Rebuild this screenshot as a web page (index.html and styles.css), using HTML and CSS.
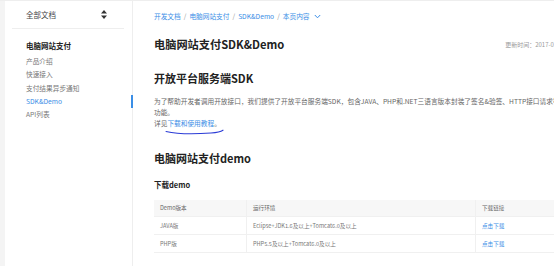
FILE: index.html
```html
<!DOCTYPE html>
<html>
<head>
  <meta charset="utf-8">
  <title>电脑网站支付SDK&amp;Demo</title>
  <link rel="stylesheet" href="styles.css">
</head>
<body>
  <div class="page">
    <div class="gutter"></div>

    <div class="sidebar">
      <div class="side-top">
        <span>全部文档</span>
        <svg class="sort" width="6" height="9" viewBox="0 0 6 9">
          <path d="M3 0 L6 3.5 L0 3.5 Z M3 9 L6 5.5 L0 5.5 Z" fill="#333"/>
        </svg>
      </div>
      <div class="side-title">电脑网站支付</div>
      <ul class="side-menu">
        <li>产品介绍</li>
        <li>快速接入</li>
        <li>支付结果异步通知</li>
        <li class="active">SDK&amp;Demo</li>
        <li>API列表</li>
      </ul>
    </div>

    <div class="main">
      <div class="crumbs">
        <a>开发文档</a> <span class="sep">/</span>
        <a>电脑网站支付</a> <span class="sep">/</span>
        <a>SDK&amp;Demo</a> <span class="sep">/</span>
        <a>本页内容</a>
        <svg width="7" height="5" viewBox="0 0 7 5"><path d="M0.8 1 L3.5 3.8 L6.2 1" fill="none" stroke="#3a8ee6" stroke-width="1"/></svg>
      </div>

      <div class="title-row">
        <h1>电脑网站支付SDK&amp;Demo</h1>
        <span class="updated">更新时间：2017-03-10</span>
      </div>

      <h2>开放平台服务端SDK</h2>
      <p class="text">为了帮助开发者调用开放接口，我们提供了开放平台服务端SDK，包含JAVA、PHP和.NET三语言版本封装了签名&amp;验签、HTTP接口请求等基础功能。</p>
      <p class="text see">详见<a>下载和使用教程</a>。
        <svg class="scribble" width="60" height="6" viewBox="0 0 60 6">
          <path d="M1 2.5 C12 5, 30 5.2, 46 4 C52 3.5, 56 2.5, 58 1.2" fill="none" stroke="#2a3bd6" stroke-width="1.1" stroke-linecap="round"/>
        </svg>
      </p>

      <h2 class="demo">电脑网站支付demo</h2>
      <h3>下载demo</h3>

      <table class="demo-table">
        <thead>
          <tr>
            <th class="c1">Demo版本</th>
            <th class="c2">运行环境</th>
            <th class="c3">下载链接</th>
          </tr>
        </thead>
        <tbody>
          <tr>
            <td>JAVA版</td>
            <td>Eclipse+JDK1.6及以上+Tomcat6.0及以上</td>
            <td><a>点击下载</a></td>
          </tr>
          <tr>
            <td>PHP版</td>
            <td>PHP5.5及以上+Tomcat6.0及以上</td>
            <td><a>点击下载</a></td>
          </tr>
        </tbody>
      </table>
    </div>
  </div>
</body>
</html>
```

FILE: styles.css
```css
html, body {
  margin: 0;
  padding: 0;
  height: 100%;
  overflow: hidden;
  background: #fff;
}

body {
  font-family: "Noto Sans CJK SC", "Liberation Sans", sans-serif;
  color: #333;
}

.page {
  display: flex;
  height: 266px;
  width: 700px;
  border-top: 1px solid #eee;
  box-sizing: border-box;
}

.gutter {
  width: 5px;
  background: #f4f4f4;
  flex: none;
}

.sidebar {
  width: 127px;
  flex: none;
  border-right: 1px solid #eee;
}

.side-top {
  display: flex;
  align-items: center;
  justify-content: space-between;
  height: 27px;
  margin: 0 8px 0 7px;
  padding: 0 17px 0 14px;
  font-size: 7.5px;
  color: #444;
  border-bottom: 1px solid #eee;
}

.side-top .sort {
  display: block;
}

.side-title {
  margin-top: 9px;
  padding-left: 21px;
  font-size: 7.5px;
  font-weight: bold;
  color: #222;
  line-height: 16px;
}

.side-menu {
  list-style: none;
  margin: 1px 0 0;
  padding: 0;
}

.side-menu li {
  position: relative;
  padding-left: 21px;
  font-size: 6.7px;
  line-height: 13.3px;
  color: #777;
}

.side-menu li.active {
  color: #3a8ee6;
}

.side-menu li.active::after {
  content: "";
  position: absolute;
  right: -1px;
  top: 0;
  width: 2px;
  height: 13px;
  background: #3a8ee6;
}

.main {
  padding-left: 21px;
  width: 420px;
  flex: none;
}

.crumbs {
  display: flex;
  align-items: center;
  gap: 3px;
  margin-top: 9px;
  height: 12px;
  font-size: 6.7px;
  color: #3a8ee6;
}

.crumbs .sep {
  color: #999;
}

.crumbs svg {
  display: block;
  margin-left: 1px;
}

.title-row {
  display: flex;
  align-items: center;
  justify-content: space-between;
  width: 410px;
  margin-top: 13px;
}

h1 {
  margin: 0;
  font-size: 11.2px;
  font-weight: bold;
  color: #222;
  line-height: 18px;
}

.updated {
  font-size: 6px;
  color: #999;
  margin-right: -2px;
}

h2 {
  margin: 16px 0 0;
  font-size: 11px;
  font-weight: bold;
  color: #222;
  line-height: 18px;
}

.text {
  margin: 0;
  font-size: 6.7px;
  line-height: 11px;
  color: #666;
  width: 420px;
}

h2 + .text {
  margin-top: 9px;
}

.see {
  position: relative;
}

.see a {
  color: #3a8ee6;
}

.scribble {
  position: absolute;
  left: 11px;
  top: 11px;
}

h2.demo {
  margin-top: 20px;
}

h3 {
  margin: 12px 0 0;
  font-size: 7.5px;
  font-weight: bold;
  color: #222;
  line-height: 12px;
}

.demo-table {
  margin-top: 9px;
  width: 410px;
  border-collapse: collapse;
  font-size: 5.6px;
  color: #777;
}

.demo-table th,
.demo-table td {
  text-align: left;
  font-weight: normal;
  padding: 0 6px;
  height: 17px;
  border-bottom: 1px solid #f0f0f0;
}

.demo-table th {
  background: #f7f7f7;
  color: #666;
  height: 16px;
}

.demo-table td + td,
.demo-table th + th {
  border-left: 1px solid #f0f0f0;
}

.demo-table .c1 {
  width: 80px;
}

.demo-table .c2 {
  width: 216px;
}

.demo-table a {
  color: #3a8ee6;
}
```
